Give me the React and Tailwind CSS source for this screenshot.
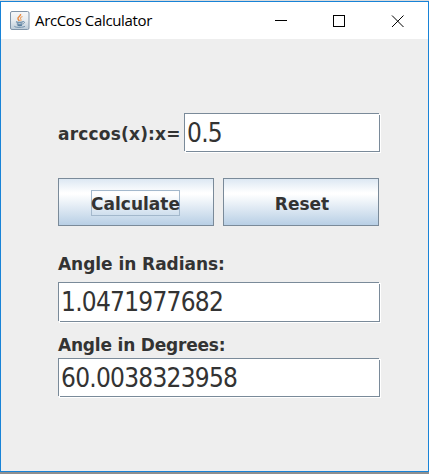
import React from 'react';

function JavaIcon() {
  return (
    <svg width="20" height="20" viewBox="0 0 20 20" fill="none" className="shrink-0">
      <defs>
        <linearGradient id="tile" x1="0" y1="0" x2="0" y2="1">
          <stop offset="0" stopColor="#f7f8f9" />
          <stop offset="0.5" stopColor="#e6ebef" />
          <stop offset="1" stopColor="#bccbd8" />
        </linearGradient>
      </defs>
      <rect x="0.5" y="0.5" width="18.5" height="18" rx="1.5" fill="url(#tile)" stroke="#8094a8" />
      <path d="M10.5 3c1 2-3.5 3-2.5 5 .3.8 1 1.200 1.300 2" stroke="#e88a42" strokeWidth="1.500" />
      <path d="M12.500 5.500c-2 .8-2.700 1.700-1.500 3 .4.6 0 1-.5 1.500" stroke="#eda467" strokeWidth="1.100" />
      <path d="M6 10.700c2 .8 5 .6 7 0M6.800 12.700c1.800.7 4 .6 5.700 0M7.500 14.300c1.500.5 3 .5 4.500 0" stroke="#557b9b" strokeWidth="1.100" />
      <path d="M13 10.500c2-.3 2 1.700-.3 2.500M4.500 15c-1 1.500 8 1.900 10.500.3" stroke="#6688a5" strokeWidth="0.900" />
    </svg>
  );
}

function Field({ value, className }) {
  return (
    <div className={'relative box-border border border-[#7a8a99] bg-white pl-[2px] pt-px shadow-[1px_1px_0_#ffffff] ' + className}>
      <span className="block whitespace-nowrap font-['DejaVu_Sans_Condensed','DejaVu_Sans',sans-serif] text-[26px] font-normal leading-[37px] tracking-[-0.75px] [font-stretch:condensed]">
        {value}
      </span>
      <i className="absolute -bottom-px -left-px h-px w-px bg-[#eeeeee]" />
      <i className="absolute -bottom-px left-0 h-px w-px bg-white" />
      <i className="absolute -right-px -top-px h-px w-px bg-[#eeeeee]" />
      <i className="absolute -right-px top-0 h-px w-px bg-white" />
    </div>
  );
}

function Button({ children, focused }) {
  return (
    <button className="flex h-12 w-[156px] items-center justify-center border border-[#7a8a99] bg-[linear-gradient(#dde8f3_0%,#ffffff_30%,#ffffff_33%,#b8cfe5_100%)] p-0 pr-px">
      <span className={'mt-[2px] box-border flex h-[26px] w-[89px] items-center justify-center whitespace-nowrap border pt-[3px] ' + (focused ? 'border-[#a3b8cc]' : 'border-transparent pl-[3px]')}>
        {children}
      </span>
    </button>
  );
}

export default function App() {
  return (
    <div className="box-border h-[474px] w-[429px] bg-[#8f8f8f] pb-[2px] font-['DejaVu_Sans',sans-serif] text-[17px] font-bold text-[#333333]">
      <div className="h-px bg-[#dcdcdc]" />
      <div className="box-border flex h-[471px] flex-col border border-[#1883d7] bg-[#eeeeee]">
        <header className="flex h-[37px] shrink-0 items-center bg-white pl-[9px] text-black">
          <JavaIcon />
          <span className="ml-[5px] whitespace-nowrap font-['Open_Sans','Noto_Sans',sans-serif] text-[15px] font-normal tracking-[-0.35px]">
            ArcCos Calculator
          </span>
          <svg className="ml-auto mr-[23px] shrink-0" width="130" height="13" viewBox="0 0 130 13" fill="none" stroke="#000">
            <path d="M0 6.500h12" />
            <rect x="58.500" y="1.500" width="11" height="11" />
            <path d="M117 1.500l11.500 11.500M128.500 1.500l-11.500 11.500" />
          </svg>
        </header>
        <main className="flex flex-col pl-[57px] pt-[74px]">
          <div className="flex h-[39px] items-center">
            <label className="w-[126px] whitespace-nowrap pt-[2px] leading-5 tracking-[0.2px]">arccos(x):x=</label>
            <Field value="0.5" className="h-[39px] w-[196px]" />
          </div>
          <div className="mt-[26px] flex gap-[9px]">
            <Button focused>Calculate</Button>
            <Button>Reset</Button>
          </div>
          <label className="mt-[28px] h-[28px] whitespace-nowrap leading-5 tracking-[-0.05px]">Angle in Radians:</label>
          <Field value="1.0471977682" className="h-[40px] w-[322px]" />
          <label className="mt-[13px] h-[23px] whitespace-nowrap leading-5 tracking-[-0.2px]">Angle in Degrees:</label>
          <Field value="60.0038323958" className="h-[39px] w-[322px]" />
        </main>
      </div>
    </div>
  );
}
